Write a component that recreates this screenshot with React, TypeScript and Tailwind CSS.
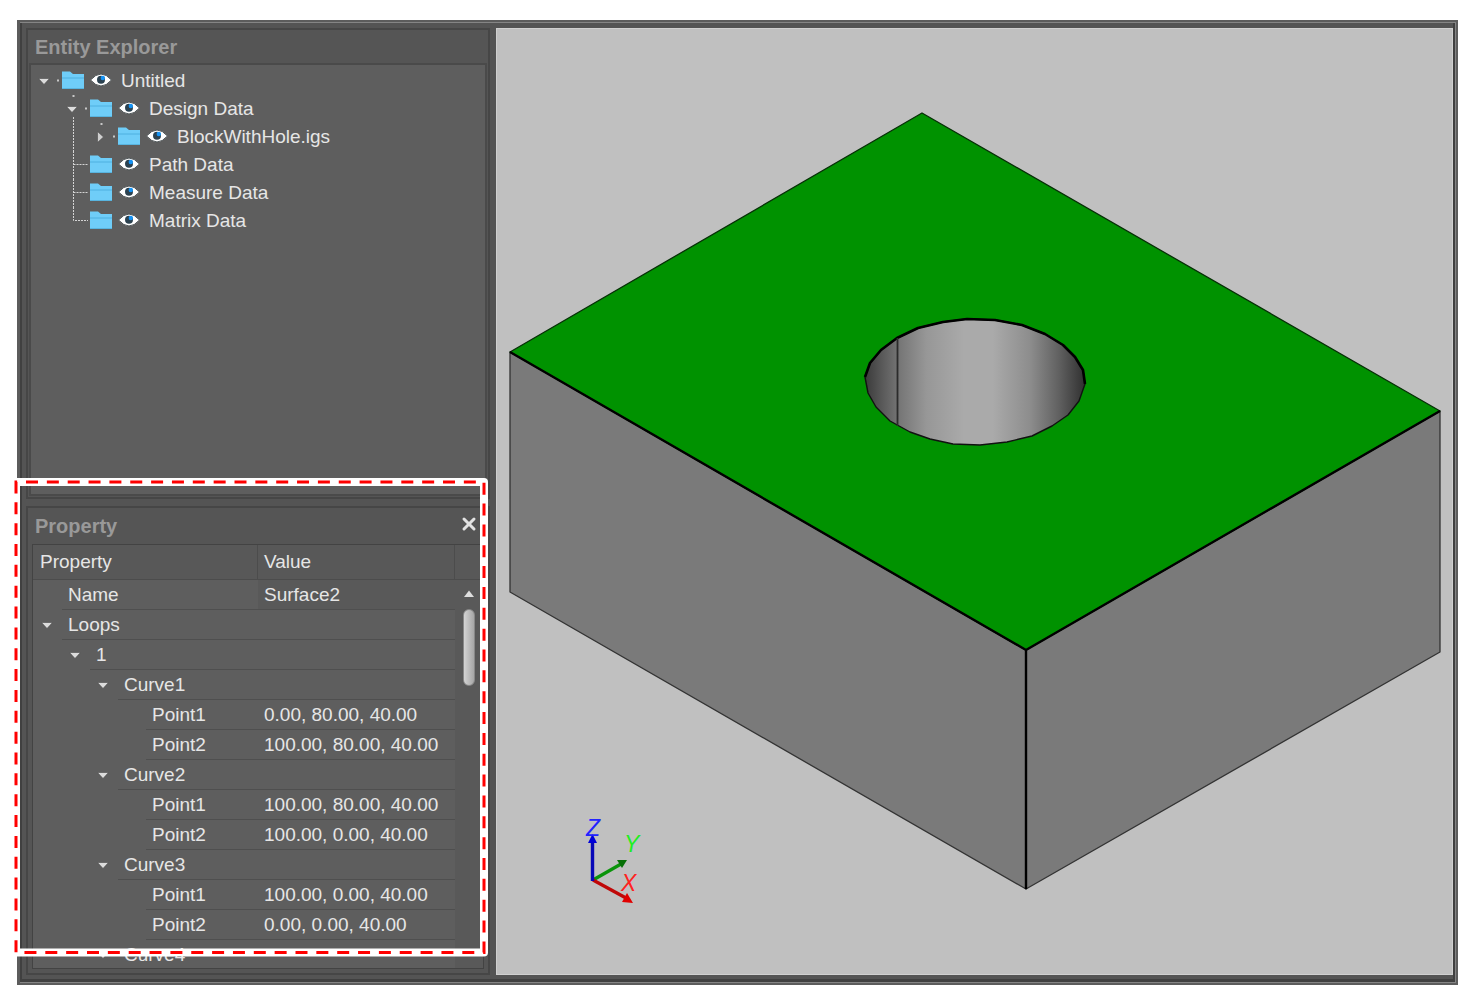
import { X } from "lucide-react";

interface TreeNode {
  label: string;
  level: number;
  state: "open" | "closed" | "leaf";
  last?: boolean;
}

interface PropertyRow {
  name: string;
  level: number;
  value?: string;
  expandable?: boolean;
}

const treeNodes: TreeNode[] = [
  { label: "Untitled", level: 0, state: "open" },
  { label: "Design Data", level: 1, state: "open" },
  { label: "BlockWithHole.igs", level: 2, state: "closed" },
  { label: "Path Data", level: 1, state: "leaf" },
  { label: "Measure Data", level: 1, state: "leaf" },
  { label: "Matrix Data", level: 1, state: "leaf", last: true },
];

const propertyRows: PropertyRow[] = [
  { name: "Name", level: 0, value: "Surface2" },
  { name: "Loops", level: 0, expandable: true },
  { name: "1", level: 1, expandable: true },
  { name: "Curve1", level: 2, expandable: true },
  { name: "Point1", level: 3, value: "0.00, 80.00, 40.00" },
  { name: "Point2", level: 3, value: "100.00, 80.00, 40.00" },
  { name: "Curve2", level: 2, expandable: true },
  { name: "Point1", level: 3, value: "100.00, 80.00, 40.00" },
  { name: "Point2", level: 3, value: "100.00, 0.00, 40.00" },
  { name: "Curve3", level: 2, expandable: true },
  { name: "Point1", level: 3, value: "100.00, 0.00, 40.00" },
  { name: "Point2", level: 3, value: "0.00, 0.00, 40.00" },
  { name: "Curve4", level: 2, expandable: true },
];

const treeIndent = ["pl-[7px]", "pl-[35px]", "pl-[63px]"];
const rowIndent = ["w-[29px]", "w-[57px]", "w-[85px]", "w-[113px]"];

function DownArrow() {
  return (
    <svg width="12" height="7" viewBox="0 0 12 7" aria-hidden="true">
      <path d="M0.5 0.5h11L6 6.5z" fill="#dcdcdc" stroke="#4a4a4a" strokeWidth="0.6" />
    </svg>
  );
}

function RightArrow() {
  return (
    <svg width="7" height="12" viewBox="0 0 7 12" aria-hidden="true">
      <path d="M0.5 0.5v11L6.5 6z" fill="#cfcfcf" stroke="#4a4a4a" strokeWidth="0.6" />
    </svg>
  );
}

function FolderIcon() {
  return (
    <svg className="shrink-0" width="22" height="20" viewBox="0 0 22 20" aria-hidden="true">
      <path d="M0 0.5h8l3 2.5h11V18H0z" fill="#6fcdf8" />
      <path d="M0 7h22" fill="none" stroke="#4fb0e0" strokeWidth="1" />
      <path d="M0 17.5h22" stroke="#58b4df" strokeWidth="1" />
    </svg>
  );
}

function EyeIcon() {
  return (
    <svg width="22" height="16" viewBox="0 0 22 16" aria-hidden="true">
      <path d="M0.5 7Q11 -5 21.5 7Q11 19 0.5 7z" fill="#fff" stroke="#4d5355" strokeWidth="1" />
      <circle cx="11" cy="6.8" r="4" fill="#2c4250" />
      <circle cx="12.8" cy="5" r="2.2" fill="#1593f5" />
    </svg>
  );
}

// dotted guides that link a node to its siblings
function TreeGuide({ node }: { node: TreeNode }) {
  if (node.state !== "leaf") {
    return (
      <svg className="absolute inset-0" width="24" height="28" aria-hidden="true">
        <path d="M19 13.5h2" stroke="#c8c8c8" strokeWidth="2" />
        {node.level > 0 && <path d="M7.5 0v2" stroke="#c8c8c8" strokeWidth="2" />}
      </svg>
    );
  }
  return (
    <svg className="absolute inset-0" width="24" height="28" aria-hidden="true">
      <path
        d={node.last ? "M7.5 0V13.5H22" : "M7.5 0V28M7.5 13.5H22"}
        fill="none"
        stroke="#d4d4d4"
        strokeWidth="1"
        strokeDasharray="2 1"
      />
    </svg>
  );
}

function TreeRow({ node }: { node: TreeNode }) {
  return (
    <li className={`relative flex h-7 items-center ${treeIndent[node.level]}`}>
      {node.level === 2 && (
        <svg className="absolute top-0 left-[42px]" width="1" height="28" aria-hidden="true">
          <path d="M0.5 0V28" stroke="#d4d4d4" strokeDasharray="2 1" />
        </svg>
      )}
      {node.label === "Design Data" && (
        <svg className="absolute bottom-0 left-[42px]" width="1" height="6" aria-hidden="true">
          <path d="M0.5 0V6" stroke="#d4d4d4" strokeDasharray="2 1" />
        </svg>
      )}
      <span className="relative flex h-7 w-6 shrink-0 items-center">
        <TreeGuide node={node} />
        {node.state !== "leaf" && (
          <button
            className="flex w-3 items-center justify-center"
            aria-label={`Toggle ${node.label}`}
          >
            {node.state === "open" ? <DownArrow /> : <RightArrow />}
          </button>
        )}
      </span>
      <FolderIcon />
      <button className="ml-[6px] shrink-0" aria-label={`Show or hide ${node.label}`}>
        <EyeIcon />
      </button>
      <span className="ml-[9px] whitespace-nowrap">{node.label}</span>
    </li>
  );
}

function EntityExplorer() {
  return (
    <section className="flex min-h-0 flex-[473] flex-col border-2 border-[#464646] bg-[#555] px-px pb-px">
      <h2 className="flex h-[33px] shrink-0 items-center pl-[6px] text-[20px] font-bold text-[#999]">
        Entity Explorer
      </h2>
      <div className="min-h-0 flex-1 border-2 border-[#4a4a4a] bg-[#5e5e5e] pt-[2px]">
        <ul>
          {treeNodes.map((node) => (
            <TreeRow key={node.label} node={node} />
          ))}
        </ul>
      </div>
    </section>
  );
}

function PropertyTable() {
  return (
    <table className="w-full table-fixed border-separate border-spacing-0 text-left">
      <colgroup>
        <col className="w-[225px]" />
        <col />
        <col className="w-7" />
      </colgroup>
      <thead>
        <tr className="h-[35px] bg-[#585858]">
          <th className="border-r border-b border-[#4c4c4c] pl-[7px] font-normal">Property</th>
          <th className="border-r border-b border-[#4c4c4c] pl-[6px] font-normal">Value</th>
          <th className="border-b border-[#4c4c4c]" />
        </tr>
      </thead>
      <tbody>
        {propertyRows.map((row, i) => (
          <tr key={i} className="h-[30px]">
            <td className="p-0">
              <div className="flex h-[30px]">
                <span className={`flex shrink-0 items-center justify-end pr-[9px] ${rowIndent[row.level]}`}>
                  {row.expandable && (
                    <button aria-label={`Toggle ${row.name}`}>
                      <DownArrow />
                    </button>
                  )}
                </span>
                <span className="flex flex-1 items-center border-b border-[#4f4f4f] pl-[6px]">
                  {row.name}
                </span>
              </div>
            </td>
            <td
              className={`border-b border-[#4f4f4f] py-0 pr-0 pl-[6px] whitespace-nowrap ${i === 0 ? "bg-[#595959]" : ""}`}
            >
              {row.value}
            </td>
            {i === 0 && (
              <td rowSpan={propertyRows.length} className="bg-[#595959] p-0 align-top">
                <div className="flex flex-col items-center pt-[10px]">
                  <button aria-label="Scroll up">
                    <svg width="10" height="7" viewBox="0 0 10 7" aria-hidden="true">
                      <path d="M0 7L5 0.5L10 7z" fill="#dedede" />
                    </svg>
                  </button>
                  <div className="mt-3 h-[77px] w-3 rounded-full border border-[#888] bg-linear-to-r from-[#d4d4d4] to-[#a6a6a6]" />
                </div>
              </td>
            )}
          </tr>
        ))}
      </tbody>
    </table>
  );
}

function PropertyPanel() {
  return (
    <section className="relative flex min-h-0 flex-[467] flex-col border-2 border-[#464646] bg-[#555] px-1 pb-1">
      <div className="flex h-9 shrink-0 items-center justify-between pr-[5px] pl-[3px]">
        <h2 className="text-[20px] font-bold text-[#999]">Property</h2>
        <button className="pb-1" aria-label="Close">
          <X className="size-5 text-[#e2e2e2]" strokeWidth={3.6} />
        </button>
      </div>
      <div className="min-h-0 flex-1 overflow-hidden border border-[#434343] bg-[#5e5e5e]">
        <PropertyTable />
      </div>
      {/* dashed callout around the panel */}
      <svg
        className="pointer-events-none absolute -top-[26px] -left-3 h-[calc(100%+6px)] w-[calc(100%+8px)] overflow-visible"
        aria-hidden="true"
      >
        <rect width="100%" height="100%" fill="none" stroke="#fff" strokeWidth="8" strokeLinejoin="round" />
        <rect
          width="100%"
          height="100%"
          fill="none"
          stroke="#f00"
          strokeWidth="3"
          strokeDasharray="12 8.85"
          strokeDashoffset="-10"
        />
      </svg>
    </section>
  );
}

const holePoints =
  "865,377 870,363 881,350 897,338 918,328 943,322 967,319 995,320 1022,325 1045,334 1063,345 1075,357 1083,370 1085,384 1079,401 1068,415 1052,426 1032,436 1007,442 980,445 953,444 930,439 910,432 890,421 876,407 868,393";

function ModelView() {
  return (
    <main className="min-w-0 flex-1 border border-[#d0d0d0] bg-[#c0c0c0]">
      <svg
        className="size-full"
        viewBox="497 29 955 945"
        role="img"
        aria-label="Block with hole"
      >
        <defs>
          <linearGradient id="bore" x1="0" x2="1" y1="0" y2="0">
            <stop offset="0" stopColor="#3a3a3a" />
            <stop offset="0.07" stopColor="#565656" />
            <stop offset="0.15" stopColor="#747474" />
            <stop offset="0.28" stopColor="#979797" />
            <stop offset="0.45" stopColor="#aaaaaa" />
            <stop offset="0.58" stopColor="#aaaaaa" />
            <stop offset="0.75" stopColor="#8d8d8d" />
            <stop offset="0.88" stopColor="#616161" />
            <stop offset="1" stopColor="#303030" />
          </linearGradient>
        </defs>
        <g strokeLinejoin="round">
          <polygon points="510,352 1026,650 1026,889 510,592" fill="#7a7a7a" stroke="#333" strokeWidth="1.3" />
          <polygon points="1440,411 1440,652 1026,889 1026,650" fill="#7a7a7a" stroke="#333" strokeWidth="1.3" />
          <polygon points="922,113 1440,411 1026,650 510,352" fill="#009200" stroke="#063006" strokeWidth="1.3" />
          <path d="M510 352L1026 650L1440 411M1026 650V889" fill="none" stroke="#000" strokeWidth="2.4" />
          <polygon points={holePoints} fill="url(#bore)" stroke="#111" strokeWidth="1.4" />
          <path
            d="M865 377L870 363L881 350L897 338L918 328L943 322L967 319L995 320L1022 325L1045 334L1063 345L1075 357L1083 370L1085 384"
            fill="none"
            stroke="#000"
            strokeWidth="2.6"
          />
          <path d="M897.5 338V426" stroke="#2c2c2c" strokeWidth="1.8" />
        </g>

        <path d="M593 880L621 864" stroke="#0a940a" strokeWidth="3.4" />
        <path d="M627 860L617 860L622 868z" fill="#077007" />
        <path d="M593 880L626 898" stroke="#c00808" strokeWidth="3.4" />
        <path d="M633 903L622 902L627 893z" fill="#e00000" />
        <path d="M592.5 881V842" stroke="#0808b8" strokeWidth="3.4" />
        <path d="M592.5 834L597 843H588z" fill="#0000d8" />
        <g fontFamily="'Liberation Sans', Arial, sans-serif" fontSize="23" fontStyle="italic">
          <text x="586" y="836" fill="#2222ff">Z</text>
          <text x="624" y="852" fill="#22ee22">Y</text>
          <text x="621" y="891" fill="#ff2222">X</text>
        </g>
      </svg>
    </main>
  );
}

export default function App() {
  return (
    <div className="h-screen bg-white pt-5 pr-[18px] pb-[19px] pl-[17px] font-['Liberation_Sans',Arial,sans-serif] text-[19px] text-[#e6e6e6]">
      <div className="h-full border-2 border-l-3 border-[#5c5c5c]">
        <div className="h-full border-t border-r border-b border-[#858585]">
          <div className="flex h-full gap-1 border-r-2 border-b-3 border-l-2 border-[#404040] bg-[#545454] pt-[5px] pb-1 pl-1">
            <aside className="flex w-[466px] shrink-0 flex-col gap-[7px] border-r-2 border-[#545454]">
              <EntityExplorer />
              <PropertyPanel />
            </aside>
            <ModelView />
          </div>
        </div>
      </div>
    </div>
  );
}
